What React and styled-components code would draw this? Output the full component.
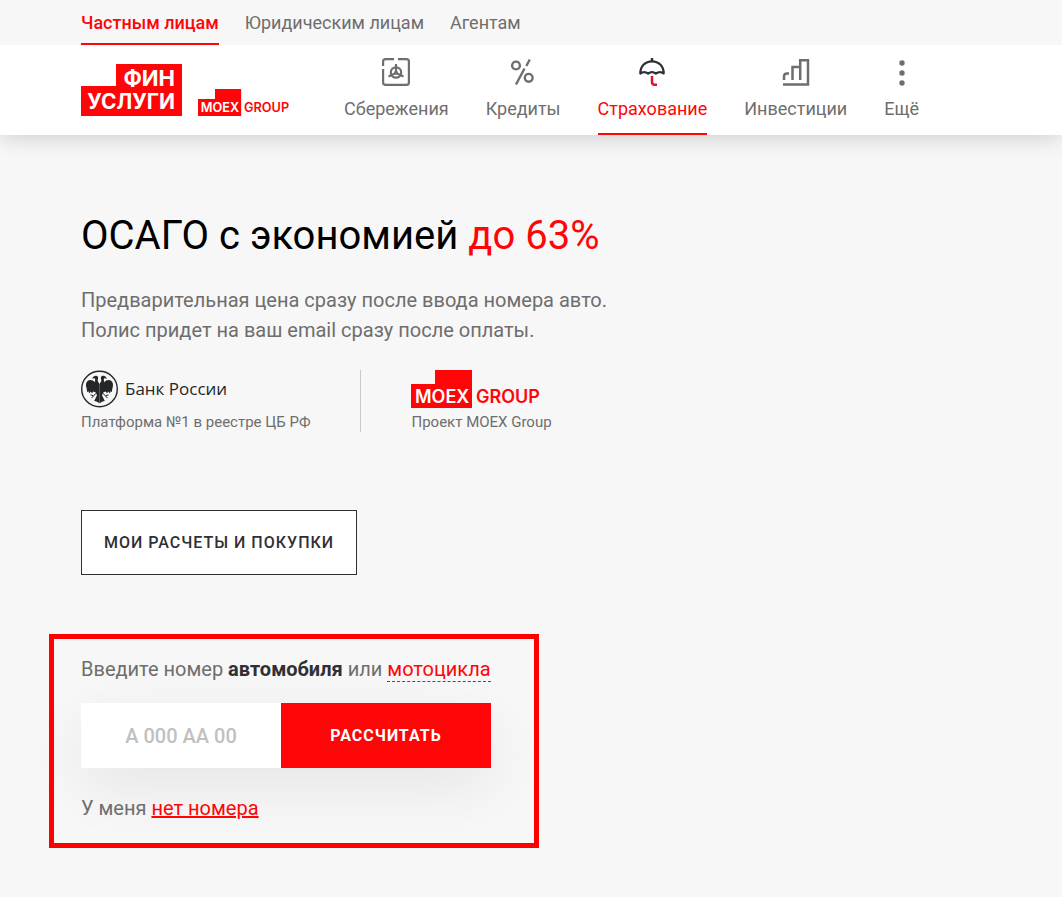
import React, { useState } from 'react';
import styled, { createGlobalStyle } from 'styled-components'

const GlobalStyle = createGlobalStyle`
  * {
    box-sizing: border-box;
  }

  body {
    margin: 0;
    background: #f7f7f7;
    color: #6e6e6e;
    font-family: Roboto, 'Liberation Sans', sans-serif;
    font-size: 18px;
  }

  svg {
    display: block;
  }
`

const TopBar = styled.nav`
  position: relative;
  z-index: 1;
  display: flex;
  gap: 26px;
  height: 45px;
  padding: 0 81px;
  background: #f7f7f7;
`

const TopLink = styled.a`
  display: flex;
  align-items: center;
  padding-top: 2px;
  border-bottom: 2px solid ${props => props.$active ? '#ff0508' : 'transparent'};
  color: ${props => props.$active ? '#ff0508' : '#6e6e6e'};
  font-weight: ${props => props.$active ? 500 : 400};
  text-decoration: none;
`

const Header = styled.header`
  display: flex;
  height: 90px;
  padding: 0 81px;
  background: white;
  box-shadow: 0 4px 20px rgba(0, 0, 0, 0.15);
`

const Logos = styled.a`
  display: flex;
  align-items: flex-end;
  gap: 16px;
  padding-bottom: 19px;
  margin-right: 54px;
`

const MainNav = styled.nav`
  display: flex;
  gap: 37px;
`

const NavLink = styled.a`
  display: flex;
  flex-direction: column;
  align-items: center;
  gap: 10px;
  padding-top: 12px;
  border-bottom: 2px solid ${props => props.$active ? '#ff0508' : 'transparent'};
  color: ${props => props.$active ? '#ff0508' : '#6e6e6e'};
  line-height: 24px;
  text-decoration: none;
`

const Main = styled.main`
  padding: 77px 81px 48px;
`

const Title = styled.h1`
  margin: 0 0 25px;
  color: black;
  font-size: 40px;
  font-weight: 400;
  line-height: 48px;

  span {
    color: #ff0508;
  }
`

const Lead = styled.p`
  margin: 0;
  font-size: 20px;
  line-height: 30px;
`

const Partners = styled.div`
  display: flex;
  margin: 25px 0 78px;
`

const Partner = styled.div`
  display: flex;
  flex-direction: column;
  gap: 4px;
  font-size: 15px;
  line-height: 20px;

  & + & {
    margin-left: 50px;
    padding-left: 50px;
    border-left: 1px solid #c8c8c8;
  }
`

const ButtonOutline = styled.button`
  height: 65px;
  padding: 0 22px;
  border: 1px solid #2f3035;
  background: white;
  color: #2f3035;
  font-family: inherit;
  font-size: 16px;
  font-weight: 500;
  letter-spacing: 1px;
  text-transform: uppercase;
`

const FormFrame = styled.form`
  width: fit-content;
  margin: 59px 0 0 -32px;
  padding: 15px 43px 20px 27px;
  border: 5px solid #ff0000;
  font-size: 20px;
  line-height: 30px;
`

const NumberLabel = styled.label`
  b {
    color: #2f3035;
  }
`

const DashedLink = styled.a`
  border-bottom: 1px dashed #ff0508;
  color: #ff0508;
  text-decoration: none;
`

const RedLink = styled.a`
  color: #ff0508;
`

const NumberRow = styled.div`
  display: flex;
  width: 410px;
  height: 65px;
  margin: 19px 0 25px;
  box-shadow: 0 20px 60px rgba(0, 0, 0, 0.07);
`

const NumberInput = styled.input`
  flex: 1;
  min-width: 0;
  padding: 0;
  border: 0;
  background: white;
  color: #2f3035;
  font-family: inherit;
  font-size: 20px;
  font-weight: 500;
  text-align: center;

  &::placeholder {
    color: #c0c0c0;
  }
`

const ButtonRed = styled.button`
  width: 210px;
  border: 0;
  background: #ff0508;
  color: white;
  font-family: inherit;
  font-size: 16px;
  font-weight: 700;
  letter-spacing: 1px;
  text-transform: uppercase;
`

function FinLogo() {
  return (
    <svg width="101" height="52" viewBox="0 0 101 52">
      <path d="M35 0h66v52H0V22h35z" fill="#ff0508" />
      <g fill="white" fontFamily="Inter, sans-serif" fontWeight="700" textAnchor="end">
        <text x="94" y="22" fontSize="22">ФИН</text>
        <text x="94" y="45" fontSize="21">УСЛУГИ</text>
      </g>
    </svg>
  )
}

function MoexLogo({ width, height }) {
  return (
    <svg width={width} height={height} viewBox="0 0 130 38">
      <path d="M24 0h37v38H0V14h24z" fill="#ff0508" />
      <g fontFamily="Inter, sans-serif" fontWeight="600" fontSize="18">
        <text x="4" y="33" fill="white">MOEX</text>
        <text x="65" y="33" fill="#ff0508">GROUP</text>
      </g>
    </svg>
  )
}

// one half of the two-headed eagle, drawn twice
const EagleHalf = () => (
  <>
    <path d="M18.500 14L16.800 11.200C16.300 9.800 17.600 8.200 17 6.900 16.300 5.500 14.200 5.300 13 6.200L10.800 8.600 13.600 8.200C14.600 9.200 14.200 10.600 13.600 12.200 12 9.800 8.600 9.200 6.300 11.300 4.600 13.200 4.700 16 5.600 18.300L6.200 22.300 7.500 21.200 8.200 23.400 9.700 21.600 11 23.300 12.400 21.400 14.500 22.200 16 25.200 13.200 31 15.500 31.600 18.500 33.300z" />
    <path d="M15 23.500L12.500 25.800 9.500 24.800M12.500 25.800L10.500 28.200" fill="none" stroke="#25262a" />
  </>
)

function BankLogo() {
  return (
    <svg width="150" height="38" viewBox="0 0 150 38">
      <circle cx="18.500" cy="19" r="17.800" fill="none" stroke="#25262a" strokeWidth="1.400" />
      <g fill="#25262a">
        <EagleHalf />
        <g transform="translate(37 0) scale(-1 1)">
          <EagleHalf />
        </g>
        <text x="44" y="25" fontFamily="'Open Sans', sans-serif" fontSize="17">Банк России</text>
      </g>
    </svg>
  )
}

function NavIcon({ children }) {
  return (
    <svg width="30" height="30" viewBox="0 0 30 30" fill="none" stroke="#6e6e6e" strokeWidth="2.200">
      {children}
    </svg>
  )
}

const SafeIcon = () => (
  <NavIcon>
    <path d="M2.100 9V4.500q0-2.400 2.400-2.400H13M17 2.100h8.500q2.400 0 2.400 2.400v21q0 2.400-2.400 2.400h-21q-2.400 0-2.400-2.400V12" />
    <circle cx="15" cy="15.500" r="5.200" />
    <path d="M15 7v9M15 16l-7.500 3.500M15 16l7.500 3.500" />
    <circle cx="15" cy="15.800" r="2" fill="#6e6e6e" stroke="none" />
  </NavIcon>
)

const PercentIcon = () => (
  <NavIcon>
    <g strokeWidth="2.400">
      <circle cx="8" cy="8.500" r="3.900" />
      <circle cx="20.700" cy="20.800" r="3.900" />
      <path d="M21.800 2.500L18.300 9M16.500 11.500L8 27.500" />
    </g>
  </NavIcon>
)

const UmbrellaIcon = () => (
  <NavIcon>
    <g stroke="#2f3035">
      <path d="M15 1v4" strokeWidth="2.500" />
      <path d="M3.300 16.500C3.300 9 8.500 4.300 15 4.300S26.700 9 26.700 16.500c-2.500-1.900-5.300-1.900-7.800 0-2.500-1.900-5.300-1.900-7.800 0-2.500-1.900-5.300-1.900-7.800 0z" strokeLinejoin="round" />
    </g>
    <path d="M15 19v6q0 2.800 2.800 2.800H20" stroke="#d9142f" strokeWidth="2.500" />
  </NavIcon>
)

const ChartIcon = () => (
  <NavIcon>
    <path d="M2 27.500H27V3.200H19.200V23M19.200 10H11.500V23M3 23v-3.500q0-3 3-3h2" strokeWidth="2.500" />
  </NavIcon>
)

const MoreIcon = () => (
  <NavIcon>
    <g fill="#6e6e6e" stroke="none">
      <circle cx="15" cy="6" r="2.700" />
      <circle cx="15" cy="16" r="2.700" />
      <circle cx="15" cy="26" r="2.700" />
    </g>
  </NavIcon>
)

const navItems = [
  { title: 'Сбережения', Icon: SafeIcon },
  { title: 'Кредиты', Icon: PercentIcon },
  { title: 'Страхование', Icon: UmbrellaIcon, active: true },
  { title: 'Инвестиции', Icon: ChartIcon },
  { title: 'Ещё', Icon: MoreIcon },
]

function App() {
  const [carNumber, setCarNumber] = useState('')

  return (
    <>
      <GlobalStyle />
      <TopBar>
        <TopLink href="#" $active>Частным лицам</TopLink>
        <TopLink href="#">Юридическим лицам</TopLink>
        <TopLink href="#">Агентам</TopLink>
      </TopBar>
      <Header>
        <Logos href="#">
          <FinLogo />
          <MoexLogo width={92} height={27} />
        </Logos>
        <MainNav>
          {navItems.map(({ title, Icon, active }) => (
            <NavLink href="#" key={title} $active={active}>
              <Icon />
              {title}
            </NavLink>
          ))}
        </MainNav>
      </Header>
      <Main>
        <Title>ОСАГО с экономией <span>до 63%</span></Title>
        <Lead>
          Предварительная цена сразу после ввода номера авто.<br />
          Полис придет на ваш email сразу после оплаты.
        </Lead>
        <Partners>
          <Partner>
            <BankLogo />
            Платформа №1 в реестре ЦБ РФ
          </Partner>
          <Partner>
            <MoexLogo width={130} height={38} />
            Проект MOEX Group
          </Partner>
        </Partners>
        <ButtonOutline type="button">Мои расчеты и покупки</ButtonOutline>
        <FormFrame onSubmit={e => e.preventDefault()}>
          <NumberLabel htmlFor="car-number">
            Введите номер <b>автомобиля</b> или <DashedLink href="#">мотоцикла</DashedLink>
          </NumberLabel>
          <NumberRow>
            <NumberInput
              id="car-number"
              placeholder="А 000 АА 00"
              value={carNumber}
              onChange={e => setCarNumber(e.target.value)}
            />
            <ButtonRed type="submit">Рассчитать</ButtonRed>
          </NumberRow>
          <div>У меня <RedLink href="#">нет номера</RedLink></div>
        </FormFrame>
      </Main>
    </>
  );
}

export default App;
